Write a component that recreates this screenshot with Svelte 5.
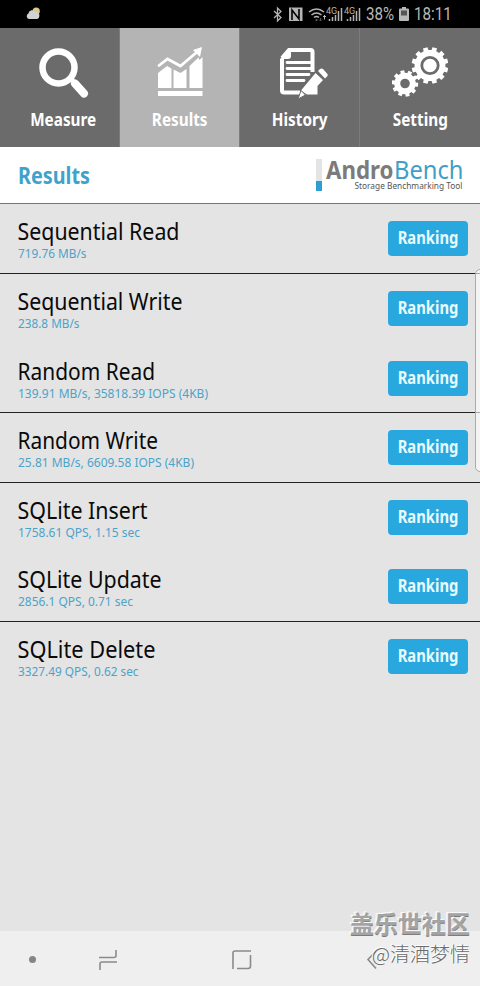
<script>
  const tabs = [
    { id: 'measure', label: 'Measure' },
    { id: 'results', label: 'Results' },
    { id: 'history', label: 'History' },
    { id: 'setting', label: 'Setting' }
  ];

  // width: drawn width of the name in px
  const results = [
    { name: 'Sequential Read', width: 161, value: '719.76 MB/s', valueWidth: 68.5, line: true },
    { name: 'Sequential Write', width: 164, value: '238.8 MB/s', valueWidth: 61.5, line: false },
    { name: 'Random Read', width: 136.5, value: '139.91 MB/s, 35818.39 IOPS (4KB)', valueWidth: 190, line: true },
    { name: 'Random Write', width: 139.5, value: '25.81 MB/s, 6609.58 IOPS (4KB)', valueWidth: 176, line: true },
    { name: 'SQLite Insert', width: 129, value: '1758.61 QPS, 1.15 sec', valueWidth: 122, line: false },
    { name: 'SQLite Update', width: 143, value: '2856.1 QPS, 0.71 sec', valueWidth: 115, line: true },
    { name: 'SQLite Delete', width: 137, value: '3327.49 QPS, 0.62 sec', valueWidth: 120.5, line: false }
  ];

  let active = $state('results');

  // outline of a cog with square teeth
  function gear(cx, cy, outer, inner, teeth, turn) {
    const points = [];
    const step = (Math.PI * 2) / teeth;
    for (let i = 0; i < teeth; i++) {
      const a = i * step + turn;
      for (const [r, d] of [[inner, -0.3], [outer, -0.24], [outer, 0.24], [inner, 0.3]]) {
        points.push(`${(cx + r * Math.cos(a + d * step)).toFixed(2)},${(cy + r * Math.sin(a + d * step)).toFixed(2)}`);
      }
    }
    return points.join(' ');
  }
</script>

<div class="screen">
  <div class="status-bar">
    <svg class="weather" width="16" height="14" viewBox="0 0 16 14">
      <circle cx="10.2" cy="4.2" r="3.6" fill="#dcc98a" />
      <path d="M3 12a3 3 0 0 1-.6-5.6A4 4 0 0 1 9.6 5a3.6 3.6 0 0 1 3.7 4.6Q13.2 12 11 12Z" fill="#d2d2d4" />
    </svg>
    <div class="status-icons">
      <svg width="92" height="18" viewBox="0 0 92 18" fill="none" stroke="#b4b4b4">
        <path d="M2 6l7 6.5L5.500 16V3L9 6.500 2 13" stroke-width="1.300" />
        <path d="M17 2.500h13.500V16H17z" fill="#b4b4b4" stroke="none" />
        <path d="M20 15V5l7 9V4" stroke="#000" stroke-width="1.600" />
        <path d="M37 7q7.500-6 15 0M39.500 10q5-4 10 0M42 12.500q2.500-2 5 0" stroke-width="1.600" />
        <path d="M44.500 14.500v1" stroke-width="1.800" />
        <path d="M48.500 13v3M47 14.500l1.500 1.500 1.500-1.500" stroke="#555" />
        <path d="M52.500 14.500V10M51 12l1.500-1.500L54 12" />
        <path d="M57.500 16v-2M60.500 16v-4M63.500 16v-6M66.500 16V6M69.500 16V3" stroke-width="1.500" />
        <path d="M75.500 16v-2M78.500 16v-4M81.500 16v-6M84.500 16V6M87.500 16V3" stroke-width="1.500" />
        <text x="54" y="9">4G</text>
        <text x="72" y="9">4G</text>
      </svg>
      <span class="percent">38%</span>
      <svg class="battery" width="10" height="14" viewBox="0 0 10 14">
        <path d="M3 0h4v1.500h2q1 0 1 1V13q0 1-1 1H1q-1 0-1-1V2.500q0-1 1-1h2z" fill="#b8b8b8" />
        <path d="M2 3.500h6v5H2z" fill="#555" />
      </svg>
      <span class="clock">18:11</span>
    </div>
  </div>

  <nav class="tabs">
    {#each tabs as tab}
      <button class="tab {tab.id}" class:active={active === tab.id} onclick={() => (active = tab.id)}>
        {#if tab.id === 'measure'}
          <svg width="64" height="54" viewBox="-4 0 64 54">
            <circle cx="26.500" cy="21.500" r="16" fill="none" stroke="#fff" stroke-width="6.500" />
            <path d="M38 32l3 3" stroke="#fff" stroke-width="5" />
            <path d="M43 37.500l9 10" stroke="#fff" stroke-width="8" stroke-linecap="round" />
          </svg>
        {:else if tab.id === 'results'}
          <svg width="56" height="54" viewBox="0 0 56 54" fill="#fff">
            <path d="M6 27l9-7 4.500 2.500V42H6zM21.500 23.500l7 3.500 6-4v19h-13zM37.500 20l9-8.500 1 2.500 3-3V42h-13zM6 45h44.500v5H6z" />
            <path d="M7 19.500l8.500-6.500 13 7L45 6" fill="none" stroke="#fff" stroke-width="2.800" stroke-linecap="round" />
            <path d="M50 1l-9 3 7 7z" />
          </svg>
        {:else if tab.id === 'history'}
          <svg width="56" height="54" viewBox="-2 0 56 54" fill="none" stroke="#fff">
            <path d="M8 12L15 4h21.500q2 0 2 2v20M26 46.500H10q-2 0-2-2V13" stroke-width="4" />
            <path d="M6 13L17 2v8q0 3-3 3z" fill="#fff" stroke="none" />
            <path d="M13 16.500h24M13 22.500h24M13 28.500h22M13 34.500h17" stroke-width="2.800" stroke-linecap="round" />
            <path d="M27 44.500L41.500 27l7.500 7-5.500 6v8.500H33z" fill="#fff" stroke="none" />
            <path d="M44 25l2-2q1.500-1 3 0l4 4.500q1.500 1.500 0 3l-2 2z" fill="#fff" stroke="none" />
            <path d="M27 44.500l4.500 4.500-7.500 4z" fill="#fff" stroke="#6b6b6b" stroke-width="1" />
          </svg>
        {:else}
          <svg width="56" height="54" viewBox="0 0 56 54" fill="#fff">
            <polygon points={gear(38, 19.5, 18.5, 15.5, 12, 0.26)} />
            <circle cx="38" cy="19.500" r="8.200" fill="none" stroke="#6b6b6b" stroke-width="2.800" />
            <polygon points={gear(13, 37.5, 13.3, 10.8, 10, 0.1)} />
            <circle cx="13" cy="37.500" r="4.800" fill="#6b6b6b" />
          </svg>
        {/if}
        <span>{tab.label}</span>
      </button>
    {/each}
  </nav>

  <header class="title-bar">
    <h1>Results</h1>
    <div class="logo">
      <div class="gauge"></div>
      <div class="logo-text">
        <svg width="140" height="24" viewBox="0 0 140 24">
          <text class="brand bold" x="0" y="20.500" textLength="67.500" lengthAdjust="spacingAndGlyphs">Andro</text>
          <text class="brand light" x="68" y="20.500" textLength="69.500" lengthAdjust="spacingAndGlyphs">Bench</text>
        </svg>
        <svg width="140" height="12" viewBox="0 0 140 12">
          <text class="tagline" x="28.500" y="7" textLength="108" lengthAdjust="spacingAndGlyphs">Storage Benchmarking Tool</text>
        </svg>
      </div>
    </div>
  </header>

  <main class="results-list">
    {#each results as result}
      <div class="result" class:line={result.line}>
        <div class="info">
          <svg width="300" height="40">
            <text class="name" x="-0.500" y="35.600" textLength={result.width + 1} lengthAdjust="spacingAndGlyphs">{result.name}</text>
          </svg>
          <svg width="300" height="24">
            <text class="value" x="0" y="13.500" textLength={result.valueWidth} lengthAdjust="spacingAndGlyphs">{result.value}</text>
          </svg>
        </div>
        <button class="ranking"><span>Ranking</span></button>
      </div>
    {/each}
  </main>

  <footer class="nav-bar">
    <svg width="480" height="55" viewBox="0 0 480 55" fill="none" stroke="#8b8b8b" stroke-width="1.600">
      <circle cx="32.500" cy="28.500" r="3.500" fill="#858585" stroke="none" />
      <path d="M99 26.500h15q2 0 2-2V19M117 31h-15q-2 0-2 2v6" />
      <path d="M251 20h-16q-2 0-2 2v16M237 37.500h11q2.500 0 2.500-2.500V24" />
      <path d="M376 20l-8 8.500 8 9" />
    </svg>
  </footer>

  <div class="edge-handle"></div>

  <div class="watermark">
    <div class="site">盖乐世社区</div>
    <div class="user">@清酒梦情</div>
  </div>
</div>

<style>
  :global(body) {
    margin: 0;
    background: #e4e4e4;
  }

  .screen {
    position: relative;
    width: 480px;
    height: 986px;
    display: flex;
    flex-direction: column;
    overflow: hidden;
    background: #e4e4e4;
    font-family: 'Noto Sans', 'Open Sans', sans-serif;
  }

  button {
    border: 0;
    padding: 0;
    font-family: inherit;
    cursor: pointer;
  }

  .status-bar {
    display: flex;
    justify-content: space-between;
    box-sizing: border-box;
    height: 28px;
    flex: none;
    padding: 0 28px 0 26px;
    background: #000;
  }

  .weather {
    margin-top: 7px;
  }

  .status-icons {
    display: flex;
    align-items: flex-start;
    color: #b8b8b8;
    font-family: Roboto, sans-serif;
    font-size: 18.5px;
    line-height: 29px;
  }

  .status-icons > svg {
    flex: none;
    margin-top: 5px;
  }

  .status-icons text {
    fill: #b4b4b4;
    stroke: none;
    font-size: 9px;
  }

  .percent,
  .clock {
    transform: scaleX(0.82);
    transform-origin: left;
  }

  .percent {
    width: 33px;
    margin-left: 2px;
  }

  .status-icons > .battery {
    margin-top: 7px;
  }

  .clock {
    width: 38px;
    margin-left: 5px;
  }

  .tabs {
    display: flex;
    height: 119px;
    flex: none;
  }

  .tab {
    box-sizing: border-box;
    width: 120px;
    display: flex;
    flex-direction: column;
    align-items: center;
    padding-top: 18px;
    border-right: 1px solid #7c7c7c;
    background: #6b6b6b;
    color: #fff;
  }

  .tab.active {
    background: #b4b4b4;
  }

  .tab:last-child {
    border-right: 0;
  }

  .tab span {
    margin-top: 6px;
    padding-left: 9px;
    font-size: 18px;
    font-weight: 700;
    line-height: 26px;
    transform: scaleX(0.85);
  }

  .tab.results span,
  .tab.history span,
  .tab.setting span {
    padding-left: 1px;
  }

  .title-bar {
    display: flex;
    justify-content: space-between;
    box-sizing: border-box;
    height: 57.2px;
    flex: none;
    padding: 0 14px 0 18px;
    border-bottom: 1px solid #777;
    background: #fff;
  }

  h1 {
    margin: 0;
    color: #3fa2cb;
    font-size: 23px;
    line-height: 56px;
    transform: scaleX(0.86);
    transform-origin: left;
  }

  .logo {
    display: flex;
    gap: 4px;
    padding-top: 12px;
  }

  .gauge {
    width: 6px;
    height: 32px;
    background: linear-gradient(#e4e4e4 22px, #2f9fd2 22px);
  }

  .logo-text {
    margin-top: -1px;
  }

  .logo-text svg {
    display: block;
    overflow: visible;
  }

  .brand {
    font-size: 24.5px;
  }

  .bold {
    fill: #7b7b7b;
    font-weight: 700;
  }

  .light {
    fill: #3f9fc8;
  }

  .tagline {
    fill: #555;
    font-size: 9px;
  }

  .results-list {
    flex: 1;
  }

  .result {
    display: flex;
    justify-content: space-between;
    align-items: flex-start;
    box-sizing: border-box;
    height: 69.67px;
    padding: 0 12px 0 18px;
    border-bottom: 1px solid transparent;
  }

  .result.line {
    border-bottom-color: #222;
  }

  .info svg {
    display: block;
    overflow: visible;
  }

  .name {
    fill: #0a0a0a;
    font-size: 23px;
  }

  .value {
    fill: #4ba3c9;
    font-size: 12px;
  }

  .ranking {
    width: 80px;
    height: 35px;
    margin-top: 17px;
    border-radius: 4px;
    background: #29a8df;
    color: #e6fbff;
    font-size: 17px;
    font-weight: 700;
    line-height: 33px;
  }

  .ranking span {
    display: block;
    height: 35px;
    transform: scaleX(0.87);
  }

  .nav-bar {
    height: 55px;
    flex: none;
    background: #efefef;
  }

  .nav-bar svg {
    display: block;
  }

  .edge-handle {
    position: absolute;
    top: 269px;
    right: -8px;
    width: 11px;
    height: 201px;
    border: 1px solid #aaa;
    border-radius: 5px;
    background: rgba(255, 255, 255, 0.6);
  }

  .watermark {
    position: absolute;
    right: 10px;
    bottom: 19px;
    font-family: 'Noto Sans CJK SC', sans-serif;
    text-align: right;
    white-space: nowrap;
  }

  .site {
    color: #a4a4a4;
    font-size: 24px;
    font-weight: 700;
    line-height: 28px;
    text-shadow: -1px -1px 0 #fafafa, -2px -1px 0 #f4f4f4, 0 1px 0 #7c7c7c;
  }

  .user {
    margin-top: 4px;
    color: #6c6c6c;
    font-size: 20px;
    line-height: 26px;
    font-weight: 300;
    text-shadow: -1px -1px 0 #fff;
  }
</style>
